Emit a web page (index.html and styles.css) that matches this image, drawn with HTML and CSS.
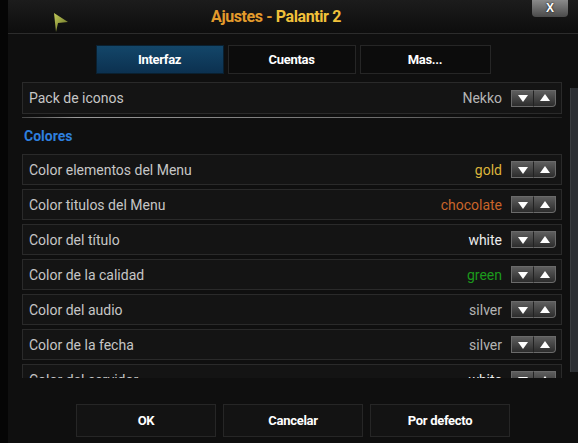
FILE: index.html
```html
<!DOCTYPE html>
<html>
<head>
  <title>Ajustes - Palantir 2</title>
  <link rel="stylesheet" href="styles.css">
</head>
<body>
  <div class="dialog">
    <div class="titlebar">
      <span class="title"><span class="t1">Ajustes - </span><span class="t2">Palantir 2</span></span>
    </div>
    <div class="close">X</div>
    <svg class="pointer" width="16" height="21" viewBox="0 0 16 21">
      <defs>
        <linearGradient id="pg" x1="0" y1="0" x2="1" y2="1">
          <stop offset="0" stop-color="#c4cc5a"/>
          <stop offset="1" stop-color="#5f6822"/>
        </linearGradient>
      </defs>
      <polygon points="1,1 15,10 5,11 3,20" fill="url(#pg)"/>
    </svg>

    <div class="tabs">
      <div class="tab active">Interfaz</div>
      <div class="tab">Cuentas</div>
      <div class="tab wide">Mas...</div>
    </div>

    <div class="content">
      <div class="list">
        <div class="row first">
          <span class="label">Pack de iconos</span>
          <span class="value">Nekko</span>
          <div class="spin"><span class="down"></span><span class="up"></span></div>
        </div>
        <div class="sep"></div>
        <div class="group">Colores</div>
        <div class="row">
          <span class="label">Color elementos del Menu</span>
          <span class="value gold">gold</span>
          <div class="spin"><span class="down"></span><span class="up"></span></div>
        </div>
        <div class="row">
          <span class="label">Color titulos del Menu</span>
          <span class="value choc">chocolate</span>
          <div class="spin"><span class="down"></span><span class="up"></span></div>
        </div>
        <div class="row">
          <span class="label">Color del título</span>
          <span class="value white">white</span>
          <div class="spin"><span class="down"></span><span class="up"></span></div>
        </div>
        <div class="row">
          <span class="label">Color de la calidad</span>
          <span class="value green">green</span>
          <div class="spin"><span class="down"></span><span class="up"></span></div>
        </div>
        <div class="row">
          <span class="label">Color del audio</span>
          <span class="value">silver</span>
          <div class="spin"><span class="down"></span><span class="up"></span></div>
        </div>
        <div class="row">
          <span class="label">Color de la fecha</span>
          <span class="value">silver</span>
          <div class="spin"><span class="down"></span><span class="up"></span></div>
        </div>
        <div class="row">
          <span class="label">Color del servidor</span>
          <span class="value white">white</span>
          <div class="spin"><span class="down"></span><span class="up"></span></div>
        </div>
      </div>
      <div class="scrollbar"></div>
    </div>

    <div class="footer">
      <div class="btn">OK</div>
      <div class="btn">Cancelar</div>
      <div class="btn">Por defecto</div>
    </div>
  </div>
</body>
</html>
```

FILE: styles.css
```css
body {
  margin: 0;
  background: #050505;
  width: 578px;
  height: 443px;
  overflow: hidden;
  font-family: Roboto, "Liberation Sans", sans-serif;
}
.dialog {
  position: relative;
  margin-left: 8px;
  height: 443px;
  background: #0f0f0f;
}
.titlebar {
  height: 33px;
  display: flex;
  align-items: center;
  justify-content: center;
  padding-right: 34px;
  background: linear-gradient(#1c1c1c, #0d0d0d);
  border-bottom: 1px solid #2c2c2c;
}
.title {
  font-weight: bold;
  font-size: 16px;
  letter-spacing: -0.4px;
}
.t1 { color: #e39b2c; }
.t2 { color: #f1c13a; }
.close {
  position: absolute;
  top: 0;
  right: 10px;
  width: 36px;
  height: 17px;
  border-radius: 0 0 4px 4px;
  background: linear-gradient(#8a8a8a, #4a4a4a);
  color: #fff;
  font-family: "Liberation Sans", sans-serif;
  font-weight: bold;
  font-size: 12px;
  line-height: 16px;
  text-align: center;
  text-shadow: 0 0 2px #000;
}
.pointer {
  position: absolute;
  left: 45px;
  top: 12px;
}
.tabs {
  display: flex;
  justify-content: center;
  gap: 4px;
  margin-top: 11px;
}
.tab {
  width: 126px;
  height: 27px;
  border: 1px solid #262626;
  background: #0c0c0c;
  color: #fff;
  font-weight: bold;
  font-size: 13px;
  letter-spacing: -0.3px;
  display: flex;
  align-items: center;
  justify-content: center;
}
.tab.wide { width: 129px; }
.tab.active {
  background: linear-gradient(#134669, #0c3150);
  border-color: #0a2030;
}
.content {
  display: flex;
  padding-left: 14px;
  margin-top: 8px;
}
.list {
  width: 541px;
  height: 296px;
  overflow: hidden;
}
.scrollbar {
  width: 7px;
  height: 284px;
  margin: 6px 0 0 8px;
  background: #2b2e32;
  border-left: 1px solid #3a3d40;
}
.row {
  display: flex;
  align-items: center;
  height: 29px;
  margin-bottom: 4px;
  padding: 0 5px 0 6px;
  background: #141414;
  border: 1px solid #2a2a2a;
  font-size: 14px;
}
.row.first {
  height: 30px;
  margin-bottom: 0;
}
.label {
  flex: 1;
  color: #c6c6c6;
}
.value {
  color: #b4b4b4;
  margin-right: 9px;
}
.value.gold { color: #dcb43c; }
.value.choc { color: #c9652a; }
.value.white { color: #ececec; }
.value.green { color: #1c9a1c; }
.spin {
  display: flex;
  width: 45px;
  height: 17px;
}
.spin span {
  flex: 1;
  position: relative;
  background: linear-gradient(#5e5e5e, #2c2c2c);
  border: 1px solid #6a6a6a;
}
.spin .down { border-right-color: #222; }
.spin .up { border-left: none; border-radius: 0 0 4px 0; }
.spin span::after {
  content: "";
  position: absolute;
  left: 50%;
  top: 50%;
  margin-left: -5px;
  border-left: 5px solid transparent;
  border-right: 5px solid transparent;
}
.spin .down::after {
  margin-top: -3px;
  border-top: 7px solid #fff;
}
.spin .up::after {
  margin-top: -4px;
  border-bottom: 7px solid #fff;
}
.sep {
  height: 1px;
  margin-top: 3px;
  background: linear-gradient(to right, #444, #9a9a9a 10%, #6a6a6a 70%, #222);
}
.group {
  height: 36px;
  line-height: 36px;
  padding-left: 2px;
  color: #2e7fde;
  font-weight: bold;
  font-size: 14px;
}
.footer {
  display: flex;
  justify-content: center;
  gap: 7px;
  margin-top: 26px;
}
.btn {
  width: 138px;
  height: 31px;
  border: 1px solid #262626;
  background: #131313;
  color: #fff;
  font-weight: bold;
  font-size: 13px;
  letter-spacing: -0.3px;
  display: flex;
  align-items: center;
  justify-content: center;
}
```
